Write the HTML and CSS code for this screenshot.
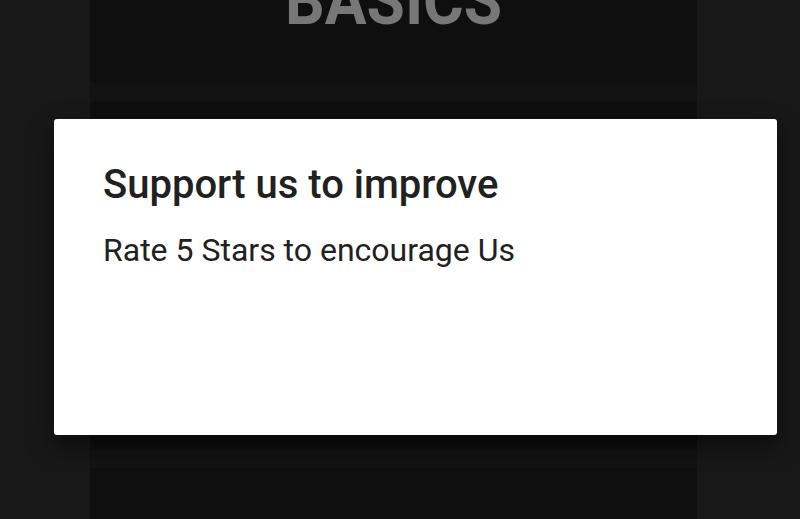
FILE: index.html
```html
<!DOCTYPE html>
<html>
<head>
<meta charset="utf-8">
<link rel="stylesheet" href="styles.css">
</head>
<body>
<div class="screen">
  <div class="list">
    <div class="card card-top"><span class="card-title">BASICS</span></div>
    <div class="card card-mid"></div>
    <div class="card card-bottom"></div>
  </div>
</div>
<div class="dialog">
  <h1 class="dialog-title">Support us to improve</h1>
  <p class="dialog-text">Rate 5 Stars to encourage Us</p>
</div>
</body>
</html>
```

FILE: styles.css
```css
html, body {
  margin: 0;
  padding: 0;
  background: #181818;
  width: 800px;
  height: 519px;
  overflow: hidden;
  font-family: Roboto, "Noto Sans", sans-serif;
}
.screen {
  width: 800px;
  height: 519px;
}
.list {
  margin-left: 90px;
  width: 607px;
  display: flex;
  flex-direction: column;
  gap: 18px;
  background: #131313;
  height: 519px;
}
.card {
  background: #0f0f0f;
}
.card-top {
  height: 83px;
  display: flex;
  justify-content: center;
  align-items: flex-end;
  overflow: hidden;
}
.card-title {
  display: inline-block;
  font-family: Roboto, sans-serif;
  font-weight: 700;
  font-size: 68px;
  line-height: 1;
  color: #777777;
  transform: scaleX(0.915);
  margin-bottom: 48px;
}
.card-mid {
  height: 349px;
}
.card-bottom {
  flex: 1;
}
.dialog {
  position: absolute;
  left: 54px;
  top: 119px;
  width: 723px;
  height: 316px;
  box-sizing: border-box;
  padding: 0 49px;
  background: #ffffff;
  border-radius: 3px;
  box-shadow: 0 10px 24px rgba(0,0,0,0.55);
}
.dialog-title {
  margin: 0;
  padding-top: 41px;
  font-size: 40px;
  font-weight: 500;
  line-height: 50px;
  color: #212121;
}
.dialog-text {
  margin: 20px 0 0;
  font-size: 32px;
  font-weight: 400;
  line-height: 40px;
  color: #212121;
}
```
